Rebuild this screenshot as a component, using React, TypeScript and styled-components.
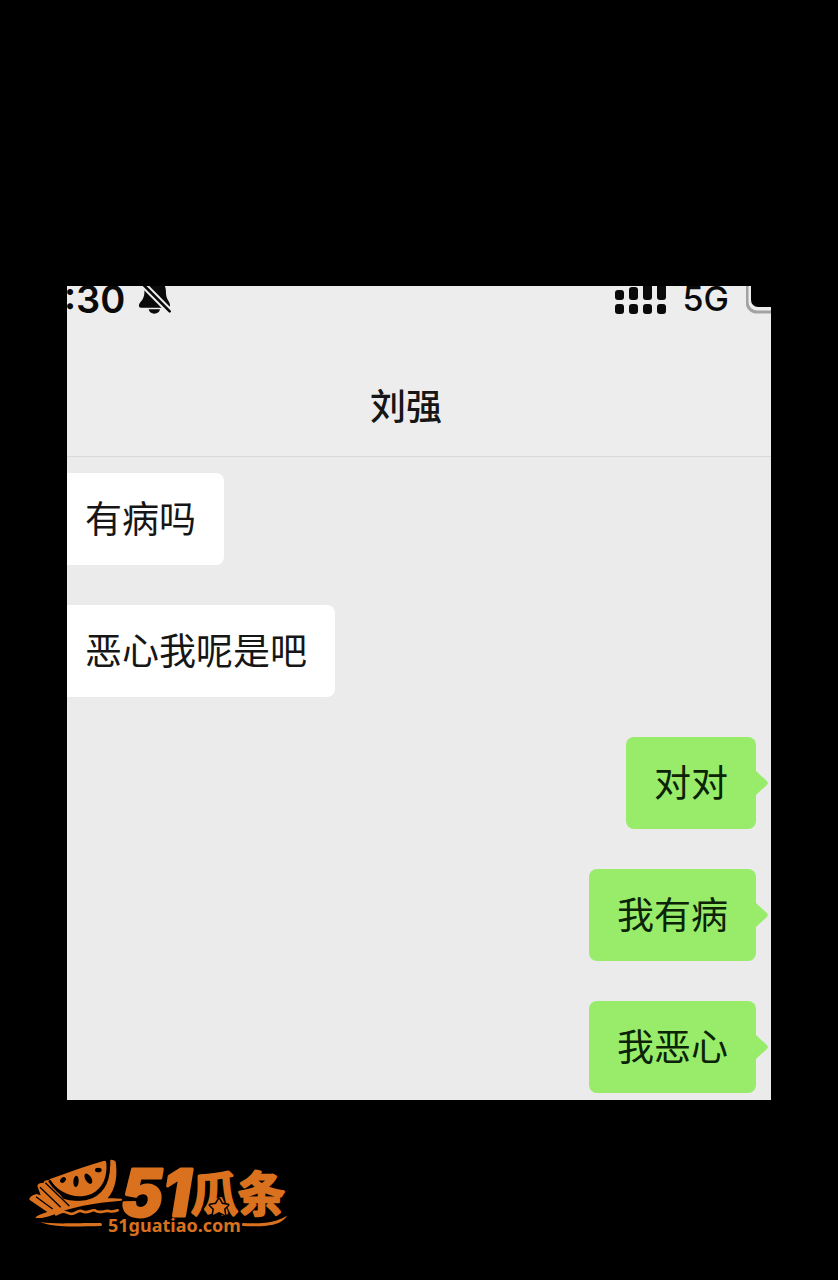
import React from "react";
import styled, { createGlobalStyle } from "styled-components";

const ORANGE = "#d9711f";
const INK = "#161616";
const CJK = `"Noto Sans CJK SC", sans-serif`;

const GlobalStyle = createGlobalStyle`
  * {
    box-sizing: border-box;
  }

  body {
    margin: 0;
    background: #000;
  }
`;

const Page = styled.div`
  min-height: 100vh;
  padding: 286px 67px 0;
  background: #000;
  font-family: ${CJK};
`;

const Phone = styled.main`
  overflow: hidden;
  background: #ebebeb;
`;

const Header = styled.header`
  height: 171px;
  background: #ededed;
  border-bottom: 1px solid #d9d9d9;
`;

const StatusBar = styled.div`
  display: flex;
  align-items: flex-end;
  justify-content: space-between;
  height: 28px;
  color: #0a0a0a;
  font-family: Inter, sans-serif;
`;

const StatusGroup = styled.div<{ $gap: number }>`
  display: flex;
  align-items: flex-end;
  gap: ${({ $gap }) => $gap}px;

  svg {
    display: block;
  }
`;

const StatusText = styled.span<{ $size: number; $weight: number }>`
  font-size: ${({ $size }) => $size}px;
  font-weight: ${({ $weight }) => $weight};
  line-height: 30px;
`;

const Clock = styled(StatusText)`
  margin-left: -3px;
`;

const Title = styled.h1`
  margin: 0;
  padding: 66px 26px 0 0;
  color: ${INK};
  font-size: 36px;
  font-weight: 500;
  line-height: 48px;
  text-align: center;
`;

const Messages = styled.ul`
  display: flex;
  flex-direction: column;
  gap: 40px;
  margin: 0;
  padding: 16px 15px 7px 0;
  list-style: none;
`;

const Bubble = styled.li<{ $mine?: boolean }>`
  position: relative;
  align-self: ${({ $mine }) => ($mine ? "flex-end" : "flex-start")};
  padding: ${({ $mine }) => ($mine ? "20px 28px 24px" : "20px 28px 24px 18px")};
  border-radius: ${({ $mine }) => ($mine ? "8px" : "0 8px 8px 0")};
  background: ${({ $mine }) => ($mine ? "#98ec6a" : "#fff")};
  color: ${({ $mine }) => ($mine ? "#0b2306" : INK)};
  font-size: 37px;
  line-height: 48px;

  &::after {
    content: "";
    display: ${({ $mine }) => ($mine ? "block" : "none")};
    position: absolute;
    top: 34px;
    left: 100%;
    width: 12px;
    height: 24px;
    background: inherit;
    clip-path: polygon(0 0, 90% 42%, 100% 50%, 90% 58%, 0 100%);
  }
`;

const Footer = styled.footer`
  margin: 50px 0 0 -47px;

  svg {
    display: block;
  }
`;

const BellOff = () => (
  <svg width="34" height="28" viewBox="234 36 102 84" aria-label="Silent">
    <path
      d="M255 20h45c14 8 18 20 18 38c0 18 12 26 12 36c0 5-3 7-8 7h-78c-6 0-8-3-7-8c2-10 14-14 16-34c1-14-2-28 2-39z"
      fill="#0a0a0a"
    />
    <path d="M266 106h34c-2 9-8 13-17 13s-15-4-17-13z" fill="#0a0a0a" />
    <path d="M240 22L334 117" stroke="#ededed" strokeWidth="20" />
    <path d="M242 24L329 112" stroke="#0a0a0a" strokeWidth="8" strokeLinecap="round" />
  </svg>
);

const Signal = () => (
  <svg width="52" height="28" viewBox="0 0 52 28" fill="#0a0a0a" aria-label="Signal">
    <rect x="1" y="4" width="9" height="10" rx="3" />
    <rect x="15" y="1" width="9" height="13" rx="3" />
    <rect x="29" y="-6" width="9" height="20" rx="3" />
    <rect x="43" y="-6" width="9" height="20" rx="3" />
    <rect x="1" y="18" width="9" height="10" rx="3" />
    <rect x="15" y="18" width="9" height="10" rx="3" />
    <rect x="29" y="18" width="9" height="10" rx="3" />
    <rect x="43" y="18" width="9" height="10" rx="3" />
  </svg>
);

const Battery = () => (
  <svg width="25" height="28" viewBox="0 0 25 28" aria-label="Battery">
    <rect x="1" y="-12" width="50" height="38" rx="10" fill="none" stroke="#a3a3a3" strokeWidth="3" />
    <rect x="5" y="-8" width="44" height="29" rx="7" fill="#000" />
  </svg>
);

const Logo = () => (
  <svg width="275" height="95" viewBox="0 0 275 95" fill={ORANGE}>
    <g transform="scale(0.33333)">
      {/* rind and board */}
      <path d="M271 30Q280 28 287 35C293 75 288 116 263 145Q286 144 305 146Q309 150 304 152C220 158 150 172 100 194Q70 206 46 204Q47 197 82 186L28 149Q27 138 50 132L62 136L52 108Q54 97 70 99L74 92L86 90L130 146C190 166 274 138 271 30Z" />
      {/* flesh */}
      <path d="M88 88C145 67 200 46 253 32Q259 32 259 39C263 80 248 116 214 132C165 151 116 129 88 88Z" />
      <path d="M88 92C116 138 165 161 215 141C252 124 270 84 265 27" fill="none" stroke="#000" strokeWidth="8" />
      <path d="M48 140L98 177M60 112L122 172M76 98L148 168" fill="none" stroke="#000" strokeWidth="4" />
      <g fill="#000">
        <ellipse cx="129" cy="90" rx="7" ry="10" transform="rotate(45 129 90)" />
        <ellipse cx="168" cy="94" rx="8" ry="17" transform="rotate(4 168 94)" />
        <ellipse cx="205" cy="86" rx="9" ry="17" transform="rotate(-32 205 86)" />
        <ellipse cx="235" cy="60" rx="10" ry="7" />
      </g>
      <path
        d="M108 193C128 182 132 184 147 190C164 198 170 179 184 183C204 194 210 179 224 181C240 194 256 178 270 184Q280 186 293 181"
        fill="none"
        stroke={ORANGE}
        strokeWidth="8"
        strokeLinecap="round"
      />
      <path d="M61 216C100 223 155 219 243 219Q249 223 243 228C150 230 100 232 61 216Z" />
      <path d="M668 219C720 222 765 219 801 197C785 224 750 231 668 228Q664 223 668 219Z" />
    </g>
    <g stroke={ORANGE} strokeLinejoin="round">
      <text
        x="101"
        y="66"
        fontFamily="Inter, sans-serif"
        fontSize="64"
        fontStyle="italic"
        fontWeight="800"
        strokeWidth="3"
      >
        51
      </text>
      <text x="171" y="61" fontFamily={CJK} fontSize="47" fontWeight="500" strokeWidth="3">
        瓜条
      </text>
    </g>
    <path
      d="M199 49L202 54L208 55L204 59L205 65L199 62L193 65L194 59L190 55L196 54Z"
      stroke="#000"
      strokeWidth="3"
      strokeLinejoin="round"
      paintOrder="stroke"
    />
    <text x="88" y="82" fontFamily="'Noto Sans', sans-serif" fontSize="18" fontWeight="700">
      51guatiao.com
    </text>
  </svg>
);

const messages = [
  { text: "有病吗" },
  { text: "恶心我呢是吧" },
  { text: "对对", mine: true },
  { text: "我有病", mine: true },
  { text: "我恶心", mine: true },
];

const App = () => (
  <>
    <GlobalStyle />
    <Page>
      <Phone>
        <Header>
          <StatusBar>
            <StatusGroup $gap={13}>
              <Clock $size={38} $weight={600}>
                :30
              </Clock>
              <BellOff />
            </StatusGroup>
            <StatusGroup $gap={17}>
              <Signal />
              <StatusText $size={34} $weight={500}>
                5G
              </StatusText>
              <Battery />
            </StatusGroup>
          </StatusBar>
          <Title>刘强</Title>
        </Header>
        <Messages>
          {messages.map(({ text, mine }) => (
            <Bubble key={text} $mine={mine}>
              {text}
            </Bubble>
          ))}
        </Messages>
      </Phone>
      <Footer>
        <Logo />
      </Footer>
    </Page>
  </>
);

export default App;
